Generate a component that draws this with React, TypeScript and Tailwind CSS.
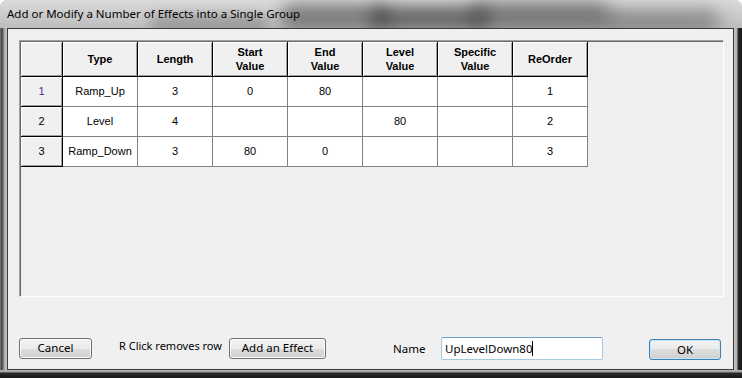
import React from "react";

const uiFont = { fontFamily: '"Noto Sans", "Open Sans", sans-serif' };
const gridFont = { fontFamily: '"Liberation Sans", Arial, sans-serif' };

type Row = { n: number; cells: string[] };

const headers = [["Type"], ["Length"], ["Start", "Value"], ["End", "Value"], ["Level", "Value"], ["Specific", "Value"], ["ReOrder"]];

const rows: Row[] = [
  { n: 1, cells: ["Ramp_Up", "3", "0", "80", "", "", "1"] },
  { n: 2, cells: ["Level", "4", "", "", "80", "", "2"] },
  { n: 3, cells: ["Ramp_Down", "3", "80", "0", "", "", "3"] },
];

// cabeçalho com aspecto de botão 3D
const HeadCell = ({ lines, w }: { lines: string[]; w: string }) => (
  <div
    className={`${w} h-[35px] shrink-0 flex flex-col items-center justify-center bg-[#f0f0f0] border-r border-b border-black shadow-[inset_1px_1px_0_#ffffff,inset_-1px_-1px_0_#a0a0a0] text-[11px] font-bold leading-[14px] text-black`}
  >
    {lines.map((l) => (
      <span key={l}>{l}</span>
    ))}
  </div>
);

const WinButton = ({ label, w, primary }: { label: string; w: string; primary?: boolean }) => (
  <button
    className={`${w} h-[21px] shrink-0 rounded-[3px] border text-[11.5px] leading-none text-black whitespace-nowrap bg-[linear-gradient(#f2f2f2_0%,#ebebeb_50%,#dddddd_50%,#cfcfcf_100%)] ${
      primary
        ? "border-[#3c7fb1] shadow-[inset_0_0_0_1px_#c4e6fa]"
        : "border-[#707070] shadow-[inset_0_0_0_1px_#fcfcfc]"
    }`}
    style={uiFont}
  >
    {label}
  </button>
);

export default function App() {
  return (
    <div className="w-[742px] h-[378px] bg-white overflow-hidden">
      <div className="w-full h-full rounded-t-[7px] overflow-hidden flex flex-col bg-[#c6c6c6]">
        {/* Title bar */}
        <div className="relative h-[28px] shrink-0 flex items-center pl-[7px] pb-[1px] overflow-hidden bg-[linear-gradient(180deg,#dadada,#c9c9c9_60%,#bdbdbd)]">
          {/* glass blur behind the title */}
          <div className="absolute left-[280px] top-[4px] w-[110px] h-[26px] rounded-full bg-[#4a4a4a] blur-[8px] opacity-60" />
          <div className="absolute left-[370px] top-[6px] w-[120px] h-[24px] rounded-full bg-[#333333] blur-[8px] opacity-65" />
          <div className="absolute left-[470px] top-[2px] w-[140px] h-[28px] rounded-full bg-[#3e3e3e] blur-[9px] opacity-60" />
          <div className="absolute left-[600px] top-[10px] w-[120px] h-[22px] rounded-full bg-[#4a4a4a] blur-[9px] opacity-50" />
          <div className="absolute left-[150px] top-[16px] w-[120px] h-[16px] rounded-full bg-[#6a6a6a] blur-[7px] opacity-50" />
          <span className="relative text-[11.5px] text-black whitespace-nowrap" style={uiFont}>
            Add or Modify a Number of Effects into a Single Group
          </span>
        </div>

        <div className="flex-1 flex min-h-0">
          {/* left frame */}
          <div className="w-[7px] shrink-0 bg-[linear-gradient(90deg,#7a7a7a,#3e3e3e_2px,#9c9c9c_4px,#c2c2c2_6px)]" />

          {/* Client area */}
          <div className="w-[727px] shrink-0 border border-[#3a3a3a] bg-[#f0f0f0] flex flex-col pl-[11px] pt-[11px]" style={gridFont}>
            {/* grid panel */}
            <div className="w-[705px] h-[257px] shrink-0 border border-t-[#a0a0a0] border-l-[#a0a0a0] border-r-white border-b-white bg-[#efefef]">
              <div className="border-t border-l border-[#696969] h-full">
                <div className="flex">
                  <HeadCell lines={[""]} w="w-[42px]" />
                  {headers.map((h, i) => (
                    <HeadCell key={i} lines={h} w="w-[75px]" />
                  ))}
                </div>
                {rows.map((r) => (
                  <div key={r.n} className="flex">
                    <div
                      className={`w-[42px] h-[30px] shrink-0 flex items-center justify-center bg-[#f0f0f0] border-r border-b border-black shadow-[inset_1px_1px_0_#ffffff,inset_-1px_-1px_0_#a0a0a0] text-[11px] ${
                        r.n === 1 ? "text-[#4a2c8c]" : "text-black"
                      }`}
                    >
                      {r.n}
                    </div>
                    {r.cells.map((c, i) => (
                      <div
                        key={i}
                        className="w-[75px] h-[30px] shrink-0 flex items-center justify-center bg-white border-r border-b border-[#808080] text-[11px] text-black"
                      >
                        {c}
                      </div>
                    ))}
                  </div>
                ))}
              </div>
            </div>

            {/* bottom row */}
            <div className="mt-[39px] flex items-center" style={uiFont}>
              <WinButton label="Cancel" w="w-[73px]" />
              <span className="w-[137px] shrink-0 pl-[27px] -mt-[3px] text-[11px] text-black whitespace-nowrap">R Click removes row</span>
              <WinButton label="Add an Effect" w="w-[97px]" />
              <span className="w-[115px] shrink-0 pl-[67px] text-[11.5px] text-black">Name</span>
              <div className="w-[162px] h-[23px] shrink-0 rounded-[2px] border border-[#a4c9e3] border-t-[#6f9fcb] bg-white flex items-center pl-[3px] text-[11.5px] text-black">
                <span>UpLevelDown80</span>
                <span className="w-px h-[15px] bg-black" />
              </div>
              <div className="ml-[46px]">
                <WinButton label="OK" w="w-[72px]" primary />
              </div>
            </div>
          </div>

          {/* right frame */}
          <div className="flex-1 bg-[linear-gradient(90deg,#c4c4c4,#b0b0b0_3px,#2a2a2a_4px,#151515)]" />
        </div>

        {/* bottom frame */}
        <div className="h-[8px] shrink-0 bg-[linear-gradient(180deg,#bcbcbc,#9a9a9a_2px,#2a2a2a_3px,#1a1a1a)]" />
      </div>
    </div>
  );
}
